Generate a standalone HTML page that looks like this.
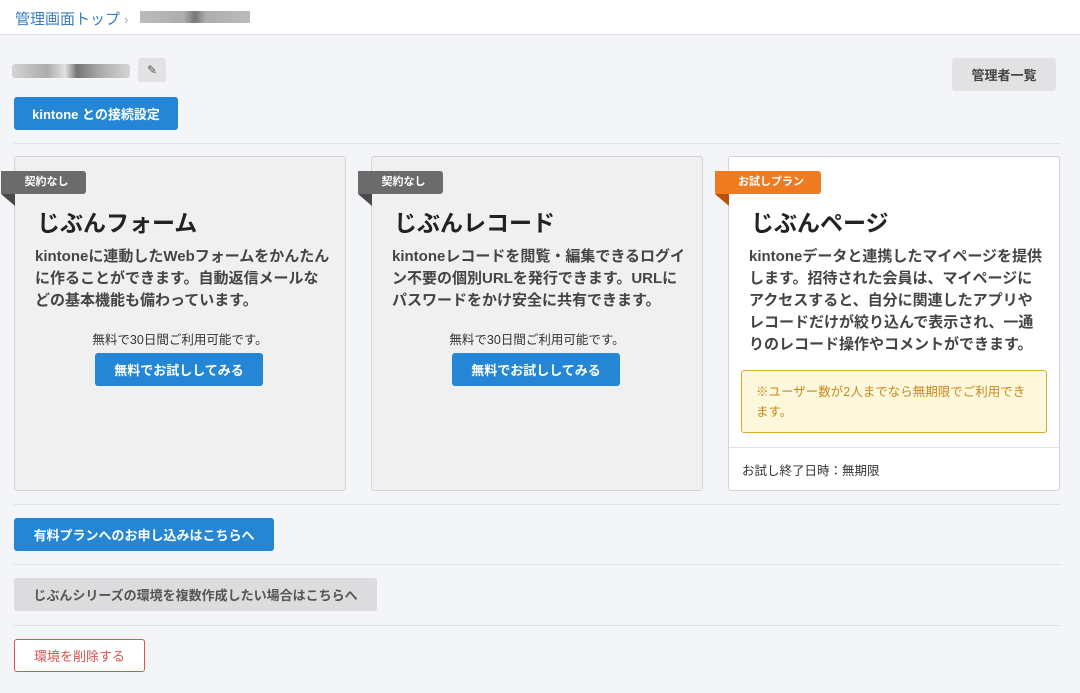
<!DOCTYPE html><html><head><meta charset="utf-8"><style>
*{box-sizing:border-box;margin:0;padding:0}
body{width:1080px;height:693px;background:#f4f5f9;font-family:"Liberation Sans","Noto Sans CJK JP",sans-serif;position:relative;overflow:hidden;color:#333}
.abs{position:absolute}
.hdr{left:0;top:0;width:1080px;height:35px;background:#fff;border-bottom:1px solid #dcdde2}
.btn{position:absolute;border-radius:3px;font-size:13px;font-weight:bold;display:flex;align-items:center;justify-content:center}
.blue{background:#2486d4;color:#fff}
.hr{position:absolute;left:14px;width:1046px;height:1px;background:#dfe0e4}
.card{position:absolute;top:156px;width:332px;height:335px;border:1px solid #d3d3d3;border-radius:3px;background:#f0f0f0}
.rib{position:absolute;left:-14px;top:14px;height:23px;width:85px;text-align:center;padding-left:6px;color:#fff;font-size:11px;font-weight:bold;line-height:23px;border-radius:0 3px 3px 0}
.rib:after{content:"";position:absolute;left:0;top:23px;border-top:12px solid #4a4a4a;border-left:14px solid transparent}
.rib.or{width:106px;background:#f07a1f}
.rib.or:after{border-top-color:#b8520e}
.card h2{position:absolute;left:22px;top:47px;font-size:23px;color:#222}
.card p{position:absolute;left:20px;top:89px;white-space:nowrap;font-size:15px;font-weight:bold;line-height:22px;color:#444}
.free{position:absolute;left:0;width:100%;top:172px;text-align:center;font-size:12.5px;color:#333}
</style></head><body>
<div class="abs hdr"></div>
<div class="abs" style="left:15px;top:8px;font-size:15px;color:#3a7bc0">管理画面トップ <span style="color:#aaa;font-size:13px">›</span></div>
<div class="abs" style="left:140px;top:11px;width:110px;height:12px;background:linear-gradient(90deg,#aaa,#999 40%,#555 50%,#999 60%,#aaa);opacity:.8"></div>
<div class="abs" style="left:12px;top:64px;width:118px;height:14px;background:linear-gradient(90deg,#ccc,#999 30%,#ddd 45%,#555 55%,#999 75%,#ccc);opacity:.8;border-radius:3px"></div>
<div class="abs" style="left:138px;top:58px;width:28px;height:24px;background:#e2e2e4;border-radius:3px;color:#555;font-size:12px;text-align:center;line-height:24px">✎</div>
<div class="btn" style="left:952px;top:58px;width:104px;height:33px;background:#e2e2e4;color:#444">管理者一覧</div>
<div class="btn blue" style="left:14px;top:97px;width:164px;height:33px">kintone との接続設定</div>
<div class="hr" style="top:143px"></div>

<div class="card" style="left:14px"><div class="rib" style="background:#6b6b6b">契約なし</div><h2>じぶんフォーム</h2><p>kintoneに連動したWebフォームをかんたん<br>に作ることができます。自動返信メールな<br>どの基本機能も備わっています。</p><div class="free">無料で30日間ご利用可能です。</div><div class="btn blue" style="left:80px;top:196px;width:168px;height:33px">無料でお試ししてみる</div></div>
<div class="card" style="left:371px"><div class="rib" style="background:#6b6b6b">契約なし</div><h2>じぶんレコード</h2><p>kintoneレコードを閲覧・編集できるログイ<br>ン不要の個別URLを発行できます。URLに<br>パスワードをかけ安全に共有できます。</p><div class="free">無料で30日間ご利用可能です。</div><div class="btn blue" style="left:80px;top:196px;width:168px;height:33px">無料でお試ししてみる</div></div>
<div class="card" style="left:728px;background:#fff"><div class="rib or">お試しプラン</div><h2>じぶんページ</h2><p>kintoneデータと連携したマイページを提供<br>します。招待された会員は、マイページに<br>アクセスすると、自分に関連したアプリや<br>レコードだけが絞り込んで表示され、一通<br>りのレコード操作やコメントができます。</p>
<div class="abs" style="left:12px;top:213px;width:306px;height:63px;background:#fdf7dc;border:1px solid #d8ab35;border-radius:3px;padding:11px 14px;font-size:12.5px;line-height:20px;color:#c8891c">※ユーザー数が2人までなら無期限でご利用できます。</div>
<div class="abs" style="left:0;top:290px;width:330px;height:1px;background:#e2e2e2"></div>
<div class="abs" style="left:13px;top:303px;font-size:12.5px;color:#333">お試し終了日時：無期限</div></div>
<div class="hr" style="top:504px"></div>
<div class="btn blue" style="left:14px;top:518px;width:260px;height:33px">有料プランへのお申し込みはこちらへ</div>
<div class="hr" style="top:564px"></div>
<div class="btn" style="left:14px;top:578px;width:363px;height:33px;background:#dcdcde;color:#555">じぶんシリーズの環境を複数作成したい場合はこちらへ</div>
<div class="hr" style="top:625px"></div>
<div class="btn" style="left:14px;top:639px;width:131px;height:33px;background:#fff;border:1px solid #d9534f;color:#d9534f;font-weight:normal">環境を削除する</div>
</body></html>
